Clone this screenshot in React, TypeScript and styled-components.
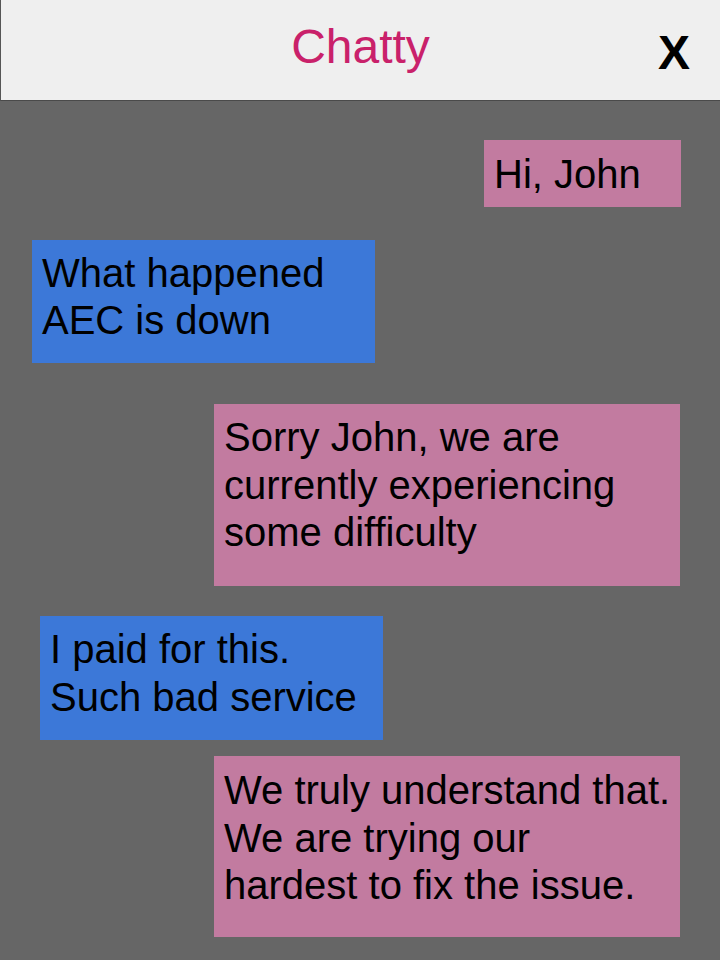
import React from "react";
import styled, { createGlobalStyle } from "styled-components";

const GlobalStyle = createGlobalStyle`
  html, body {
    margin: 0;
    padding: 0;
    background: #666666;
    font-family: "Liberation Sans", Arial, sans-serif;
  }
  #root {
    min-height: 100vh;
  }
`;

const Page = styled.div`
  display: flex;
  flex-direction: column;
  min-height: 100vh;
  background: #666666;
`;

const Header = styled.header`
  display: grid;
  grid-template-columns: 1fr auto 1fr;
  align-items: start;
  height: 100px;
  background: #efefef;
  border-left: 1px solid #555555;
  border-bottom: 1px solid #4a4a4a;
`;

const Title = styled.h1`
  grid-column: 2;
  margin: 23px 0 0 0;
  font-family: "Liberation Sans", Arial, sans-serif;
  font-weight: 400;
  font-size: 48px;
  line-height: 48px;
  color: #c9216a;
`;

const Close = styled.button`
  grid-column: 3;
  justify-self: end;
  margin: 29px 30px 0 0;
  padding: 0;
  border: none;
  background: transparent;
  font-family: "Liberation Sans", Arial, sans-serif;
  font-weight: 700;
  font-size: 48px;
  line-height: 48px;
  color: #000000;
  cursor: pointer;
`;

const Thread = styled.main`
  display: flex;
  flex-direction: column;
`;

type BubbleProps = {
  $mine: boolean;
  $width: number;
  $height: number;
  $edge: number;
  $top: number;
  $padTop: number;
};

const Bubble = styled.div<BubbleProps>`
  box-sizing: border-box;
  align-self: ${(p) => (p.$mine ? "flex-end" : "flex-start")};
  width: ${(p) => p.$width}px;
  height: ${(p) => p.$height}px;
  margin-top: ${(p) => p.$top}px;
  margin-left: ${(p) => (p.$mine ? 0 : p.$edge)}px;
  margin-right: ${(p) => (p.$mine ? p.$edge : 0)}px;
  padding: ${(p) => p.$padTop}px 10px 0 10px;
  background: ${(p) => (p.$mine ? "#c27ba0" : "#3c78d8")};
  color: #000000;
  font-family: "Liberation Sans", Arial, sans-serif;
  font-size: 40px;
  line-height: 47.5px;
  white-space: nowrap;
`;

type Message = {
  mine: boolean;
  lines: string[];
  width: number;
  height: number;
  edge: number;
  top: number;
  padTop: number;
};

const messages: Message[] = [
  { mine: true, lines: ["Hi, John"], width: 197, height: 67, edge: 39, top: 39, padTop: 10.5 },
  { mine: false, lines: ["What happened", "AEC is down"], width: 343, height: 123, edge: 32, top: 33, padTop: 9.5 },
  {
    mine: true,
    lines: ["Sorry John, we are", "currently experiencing", "some difficulty"],
    width: 466,
    height: 182,
    edge: 40,
    top: 41,
    padTop: 10,
  },
  { mine: false, lines: ["I paid for this.", "Such bad service"], width: 343, height: 124, edge: 40, top: 30, padTop: 10 },
  {
    mine: true,
    lines: ["We truly understand that.", "We are trying our", "hardest to fix the issue."],
    width: 466,
    height: 181,
    edge: 40,
    top: 16,
    padTop: 11,
  },
];

export default function App() {
  return (
    <>
      <GlobalStyle />
      <Page>
        <Header>
          <Title>Chatty</Title>
          <Close aria-label="Close">X</Close>
        </Header>
        <Thread>
          {messages.map((m, i) => (
            <Bubble
              key={i}
              $mine={m.mine}
              $width={m.width}
              $height={m.height}
              $edge={m.edge}
              $top={m.top}
              $padTop={m.padTop}
            >
              {m.lines.map((l, j) => (
                <React.Fragment key={j}>
                  {l}
                  {j < m.lines.length - 1 && <br />}
                </React.Fragment>
              ))}
            </Bubble>
          ))}
        </Thread>
      </Page>
    </>
  );
}
